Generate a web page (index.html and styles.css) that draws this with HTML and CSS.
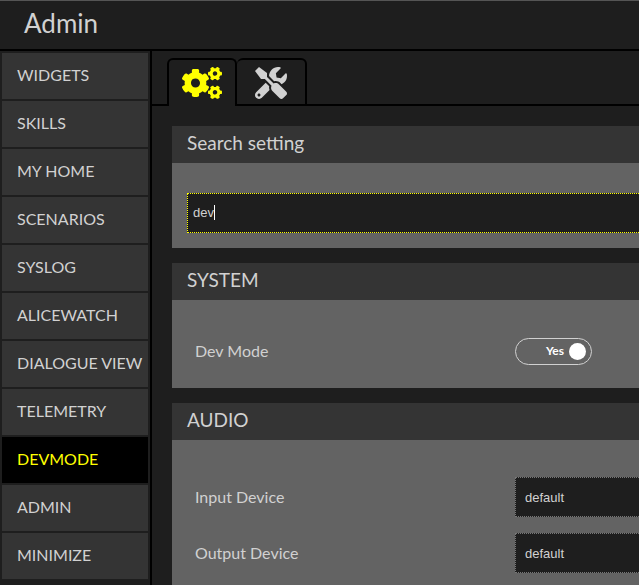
FILE: index.html
```html
<!DOCTYPE html>
<html lang="en">
<head>
<meta charset="utf-8">
<title>Admin</title>
<link rel="stylesheet" href="styles.css">
</head>
<body>
<header class="topbar"><h1 class="topbar-title">Admin</h1></header>
<div class="layout">
  <nav class="sidebar">
    <a class="nav-item" href="#widgets">WIDGETS</a>
    <a class="nav-item" href="#skills">SKILLS</a>
    <a class="nav-item" href="#myhome">MY HOME</a>
    <a class="nav-item" href="#scenarios">SCENARIOS</a>
    <a class="nav-item" href="#syslog">SYSLOG</a>
    <a class="nav-item" href="#alicewatch">ALICEWATCH</a>
    <a class="nav-item" href="#dialogue">DIALOGUE VIEW</a>
    <a class="nav-item" href="#telemetry">TELEMETRY</a>
    <a class="nav-item active" href="#devmode">DEVMODE</a>
    <a class="nav-item" href="#admin">ADMIN</a>
    <a class="nav-item" href="#minimize">MINIMIZE</a>
  </nav>
  <main class="content">
    <div class="tabs">
      <button class="tab active" type="button" aria-label="Settings">
        <svg class="icon-cogs" viewBox="0 0 640 512" aria-hidden="true">
          <path id="small-cog" d="M512.1 191l-8.2 14.3c-3 5.3-9.4 7.5-15.1 5.4-11.8-4.4-22.6-10.7-32.1-18.6-4.6-3.8-5.8-10.5-2.8-15.7l8.2-14.3c-6.9-8-12.3-17.3-15.9-27.4h-16.5c-6 0-11.2-4.3-12.2-10.3-2-12-2.1-24.6 0-37.1 1-6 6.2-10.4 12.2-10.4h16.5c3.6-10.1 9-19.4 15.9-27.4l-8.2-14.3c-3-5.2-1.9-11.9 2.8-15.7 9.5-7.9 20.4-14.2 32.1-18.6 5.7-2.1 12.1.1 15.1 5.4l8.2 14.3c10.5-1.9 21.2-1.9 31.7 0L552 6.3c3-5.3 9.4-7.5 15.1-5.4 11.8 4.4 22.6 10.7 32.1 18.6 4.6 3.8 5.8 10.5 2.8 15.7l-8.2 14.3c6.9 8 12.3 17.3 15.9 27.4h16.5c6 0 11.2 4.3 12.2 10.3 2 12 2.1 24.6 0 37.1-1 6-6.2 10.4-12.2 10.4h-16.5c-3.6 10.1-9 19.4-15.9 27.4l8.2 14.3c3 5.2 1.9 11.9-2.8 15.7-9.5 7.9-20.4 14.2-32.1 18.6-5.7 2.1-12.1-.1-15.1-5.4l-8.2-14.3c-10.4 1.9-21.2 1.9-31.7 0zm-10.5-58.8c38.5 29.6 82.4-14.3 52.8-52.8-38.5-29.7-82.4 14.3-52.8 52.8z"/>
          <use href="#small-cog" transform="translate(0 299)"/>
          <path d="M386.3 286.1l33.7 16.8c10.1 5.8 14.5 18.1 10.5 29.1-8.9 24.2-26.4 46.4-42.6 65.8-7.4 8.9-20.2 11.1-30.3 5.3l-29.1-16.8c-16 13.7-34.6 24.6-54.9 31.7v33.6c0 11.6-8.3 21.6-19.7 23.6-24.6 4.2-50.4 4.4-75.9 0-11.5-2-20-11.9-20-23.6V418c-20.3-7.2-38.9-18-54.9-31.7L74 403c-10 5.8-22.9 3.6-30.3-5.3-16.2-19.4-33.3-41.6-42.2-65.7-4-10.9.4-23.2 10.5-29.1l33.3-16.8c-3.9-20.9-3.9-42.4 0-63.4L12 205.8c-10.1-5.8-14.6-18.1-10.5-29 8.9-24.2 26-46.4 42.2-65.8 7.4-8.9 20.2-11.1 30.3-5.3l29.1 16.8c16-13.7 34.6-24.6 54.9-31.7V57.1c0-11.5 8.2-21.5 19.6-23.5 24.6-4.2 50.5-4.4 76-.1 11.5 2 20 11.9 20 23.6v33.6c20.3 7.2 38.9 18 54.9 31.7l29.1-16.8c10-5.8 22.9-3.6 30.3 5.3 16.2 19.4 33.2 41.6 42.1 65.8 4 10.9.1 23.2-10 29.1l-33.7 16.8c3.9 21 3.9 42.5 0 63.5zm-117.6 21.1c59.2-77-28.7-164.9-105.7-105.7-59.2 77 28.7 164.9 105.7 105.7z"/>
        </svg>
      </button>
      <button class="tab" type="button" aria-label="Tools">
        <svg class="icon-tools" viewBox="0 0 512 512" aria-hidden="true">
          <path d="M501.1 395.7L384 278.6c-23.1-23.1-57.6-27.6-85.4-13.9L192 158.1V96L64 0 0 64l96 128h62.1l106.6 106.6c-13.6 27.8-9.2 62.3 13.9 85.4l117.1 117.1c14.6 14.6 38.2 14.6 52.7 0l52.7-52.7c14.5-14.6 14.5-38.2 0-52.7zM331.7 225c28.3 0 54.9 11 74.9 31l19.4 19.4c15.8-6.9 30.8-16.5 43.8-29.5 37.1-37.1 49.7-89.3 37.9-136.7-2.2-9-13.5-12.1-20.1-5.5l-74.4 74.4-67.9-11.3L334 98.9l74.4-74.4c6.6-6.6 3.4-17.9-5.7-20.2-47.4-11.7-99.6.9-136.6 37.9-28.5 28.5-41.9 66.1-41.2 103.6l82.1 82.1c8.1-1.9 16.5-2.9 24.7-2.9zm-103.9 82l-56.7-56.7L18.7 402.8c-25 25-25 65.5 0 90.5s65.5 25 90.5 0l123.6-123.6c-7.6-19.9-9.9-41.6-5-62.7zM64 472c-13.2 0-24-10.8-24-24 0-13.3 10.7-24 24-24s24 10.7 24 24c0 13.2-10.7 24-24 24z"/>
        </svg>
      </button>
    </div>
    <div class="panels">
      <section class="panel">
        <h2 class="panel-title"><label for="search">Search setting</label></h2>
        <div class="panel-body search-body">
          <input class="field search" id="search" type="text" value="dev" autofocus>
        </div>
      </section>
      <section class="panel">
        <h2 class="panel-title">SYSTEM</h2>
        <div class="panel-body">
          <div class="row">
            <label class="row-label" for="devmode">Dev Mode</label>
            <span class="toggle">
              <input class="toggle-input" id="devmode" type="checkbox" checked>
              <span class="toggle-text">Yes</span>
              <span class="toggle-knob"></span>
            </span>
          </div>
        </div>
      </section>
      <section class="panel">
        <h2 class="panel-title">AUDIO</h2>
        <div class="panel-body">
          <div class="row">
            <label class="row-label" for="input-device">Input Device</label>
            <select class="field select" id="input-device"><option>default</option></select>
          </div>
          <div class="row">
            <label class="row-label" for="output-device">Output Device</label>
            <select class="field select" id="output-device"><option>default</option></select>
          </div>
        </div>
      </section>
    </div>
  </main>
</div>
</body>
</html>
```
FILE: styles.css
```css
* {
  box-sizing: border-box;
}

body {
  margin: 0;
  height: 100vh;
  display: flex;
  flex-direction: column;
  overflow: hidden;
  background: #1e1e1e;
  color: #d1d1d1;
  font-family: Lato, "Liberation Sans", sans-serif;
  font-size: 16px;
}

.topbar {
  flex: none;
  padding: 8px 24px 11px;
  border-top: 1px solid #555;
  border-bottom: 2px solid #000;
}

.topbar-title {
  margin: 0;
  font-size: 26px;
  line-height: 29px;
  font-weight: 400;
}

.layout {
  flex: 1;
  min-height: 0;
  display: flex;
}

.sidebar {
  flex: none;
  width: 152px;
  padding: 2px;
  display: flex;
  flex-direction: column;
  gap: 2px;
  border-right: 2px solid #000;
}

.nav-item {
  flex: none;
  padding: 0 15px 2px;
  line-height: 44px;
  background: #343434;
  color: inherit;
  text-decoration: none;
  white-space: nowrap;
}

.nav-item.active {
  background: #000;
  color: #ff0;
}

.content {
  flex: 1;
  min-width: 0;
}

.tabs {
  display: flex;
  padding-top: 7px;
}

.tabs::before,
.tabs::after {
  content: "";
  width: 15px;
  border-bottom: 2px solid #000;
}

.tabs::after {
  flex: 1;
}

.tab {
  width: 70px;
  height: 48px;
  padding: 2px 0 0;
  display: flex;
  align-items: center;
  justify-content: center;
  border: 2px solid #000;
  border-radius: 6px 6px 0 0;
  background: none;
  color: #d1d1d1;
}

.tab + .tab {
  border-left: 0;
}

.tab.active {
  padding-bottom: 2px;
  border-bottom: 0;
  color: #ff0;
}

.icon-cogs,
.icon-tools {
  height: 32px;
  fill: currentColor;
}

.icon-cogs {
  width: 40px;
}

.icon-tools {
  width: 32px;
}

.panels {
  padding: 20px 0 0 20px;
  display: flex;
  flex-direction: column;
  gap: 15px;
}

.panel-title {
  margin: 0;
  padding: 0 15px 3px;
  background: #343434;
  font-size: 19px;
  line-height: 34px;
  font-weight: 400;
}

.panel-body {
  padding: 37px 0 22px 23px;
  background: #636363;
}

.search-body {
  padding: 30px 0 15px 15px;
}

.row {
  display: flex;
  align-items: center;
  min-height: 29px;
}

.row + .row {
  margin-top: 16px;
}

.row-label {
  flex: none;
  width: 320px;
  padding-bottom: 2px;
}

.field {
  height: 40px;
  border: 1px dotted #777;
  border-right: 0;
  border-radius: 0;
  outline: 0;
  background: #1e1e1e;
  color: #d1d1d1;
  font-family: "Liberation Sans", Arial, sans-serif;
  font-size: 13px;
}

.search {
  display: block;
  width: 100%;
  padding: 0 5px 2px;
}

.search:focus {
  border-color: #ff0;
  caret-color: transparent;
  background: linear-gradient(#fff, #fff) 26px 11px / 1px 15px no-repeat #1e1e1e;
}

.select {
  flex: 1;
  min-width: 0;
  padding: 0 9px;
  appearance: none;
}

.toggle {
  position: relative;
  width: 77px;
  height: 27px;
  padding: 0 5px;
  display: flex;
  align-items: center;
  justify-content: flex-end;
  gap: 5px;
  border: 1px solid #d1d1d1;
  border-radius: 14px;
  color: #fff;
  font-size: 12px;
  font-weight: 700;
}

.toggle-text {
  padding-bottom: 2px;
}

.toggle-input {
  position: absolute;
  inset: 0;
  width: 100%;
  height: 100%;
  margin: 0;
  opacity: 0;
}

.toggle-knob {
  width: 17px;
  height: 17px;
  border-radius: 50%;
  background: #fff;
}
```
